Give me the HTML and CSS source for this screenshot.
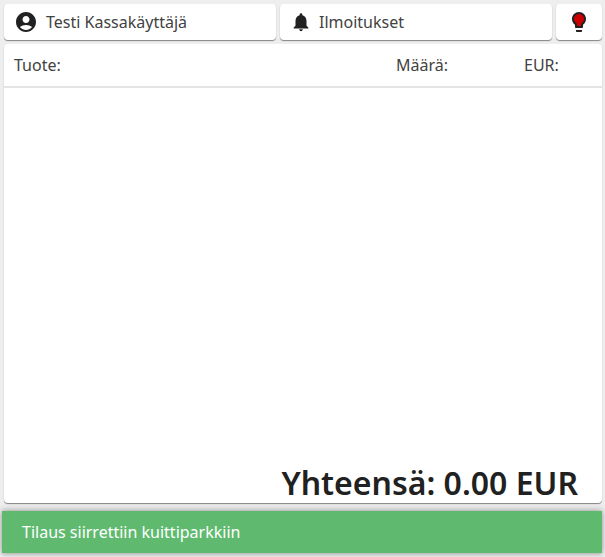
FILE: index.html

```html
<!DOCTYPE html>
<html lang="fi">
<head>
  <meta charset="UTF-8">
  <meta name="viewport" content="width=device-width, initial-scale=1.0">
  <title>Kassa</title>
  <link rel="stylesheet" href="styles.css">
</head>
<body>
  <div class="topbar">
    <button class="btn btn-wide">
      <svg class="icon" viewBox="0 0 24 24" fill="currentColor">
        <path d="M12 2C6.48 2 2 6.48 2 12s4.48 10 10 10 10-4.48 10-10S17.52 2 12 2zm0 4c1.93 0 3.5 1.57 3.5 3.5S13.93 13 12 13s-3.5-1.57-3.5-3.5S10.07 6 12 6zm0 14c-2.03 0-4.43-.82-6.14-2.88C7.55 15.8 9.68 15 12 15s4.45.8 6.14 2.12C16.43 19.18 14.03 20 12 20z"/>
      </svg>
      <span>Testi Kassakäyttäjä</span>
    </button>
    <button class="btn btn-wide btn-notify">
      <svg class="icon icon-small" viewBox="0 0 24 24" fill="currentColor">
        <path d="M12 22c1.1 0 2-.9 2-2h-4c0 1.1.89 2 2 2zm6-6v-5c0-3.07-1.64-5.64-4.5-6.32V4c0-.83-.67-1.5-1.5-1.5s-1.5.67-1.5 1.5v.68C7.63 5.36 6 7.92 6 11v5l-2 2v1h16v-1l-2-2z"/>
      </svg>
      <span>Ilmoitukset</span>
    </button>
    <button class="btn btn-status">
      <svg class="icon" viewBox="0 0 24 24">
        <circle class="bulb-glow" cx="12" cy="9" r="6"/>
        <rect class="bulb-glow" x="9" y="12" width="6" height="5"/>
        <path fill="currentColor" d="M9 21c0 .55.45 1 1 1h4c.55 0 1-.45 1-1v-1H9v1zm3-19C8.14 2 5 5.14 5 9c0 2.38 1.19 4.47 3 5.74V17c0 .55.45 1 1 1h6c.55 0 1-.45 1-1v-2.26c1.81-1.27 3-3.36 3-5.74 0-3.86-3.14-7-7-7zm2.85 11.1l-.85.6V16h-4v-2.3l-.85-.6A4.997 4.997 0 0 1 7 9c0-2.76 2.24-5 5-5s5 2.24 5 5c0 1.63-.8 3.16-2.15 4.1z"/>
      </svg>
    </button>
  </div>

  <div class="receipt">
    <div class="receipt-head">
      <span>Tuote:</span>
      <span>Määrä:</span>
      <span>EUR:</span>
    </div>
    <div class="receipt-rows"></div>
    <div class="receipt-total">Yhteensä: 0.00 EUR</div>
  </div>

  <div class="snackbar">Tilaus siirrettiin kuittiparkkiin</div>
</body>
</html>
```

FILE: styles.css

```css
* {
  margin: 0;
  padding: 0;
  box-sizing: border-box;
}

html, body {
  height: 100%;
}

body {
  display: flex;
  flex-direction: column;
  font-family: 'Noto Sans', 'Open Sans', sans-serif;
  background: #eeeeee;
  color: #424242;
  overflow: hidden;
}

.topbar {
  display: grid;
  grid-template-columns: 1fr 1fr 46px;
  gap: 4px;
  padding: 4px 3px 0 4px;
}

.btn {
  display: flex;
  align-items: center;
  height: 36px;
  border: none;
  border-radius: 4px;
  background: white;
  color: #424242;
  font-family: inherit;
  font-size: 16px;
  box-shadow: 0 1px 1px rgba(0, 0, 0, 0.45);
}

.btn-wide {
  gap: 8px;
  padding: 0 10px;
}

.btn-notify {
  gap: 7px;
}

.btn-status {
  justify-content: center;
}

.icon {
  width: 24px;
  height: 24px;
  flex: none;
  color: #212121;
}

.icon-small {
  width: 22px;
  height: 22px;
}

.bulb-glow {
  fill: #cc0000;
}

.receipt {
  flex: 1;
  display: flex;
  flex-direction: column;
  margin: 4px 3px 0 4px;
  background: white;
  border-radius: 4px;
  box-shadow: 0 1px 1px rgba(0, 0, 0, 0.45);
}

.receipt-head {
  display: grid;
  grid-template-columns: 1fr 128px 68px;
  align-items: center;
  height: 44px;
  padding: 0 10px;
  border-bottom: 2px solid #e4e4e4;
  font-size: 16px;
}

.receipt-rows {
  flex: 1;
}

.receipt-total {
  padding-right: 24px;
  text-align: right;
  font-size: 32px;
  font-weight: 600;
  line-height: 40px;
  color: #212121;
}

.snackbar {
  display: flex;
  align-items: center;
  height: 42px;
  margin: 8px 3px 4px 2px;
  padding: 0 20px;
  background: #5fba70;
  color: white;
  font-size: 16px;
  box-shadow: 0 -1px 6px rgba(0, 0, 0, 0.3), 0 2px 4px rgba(0, 0, 0, 0.15);
}
```
